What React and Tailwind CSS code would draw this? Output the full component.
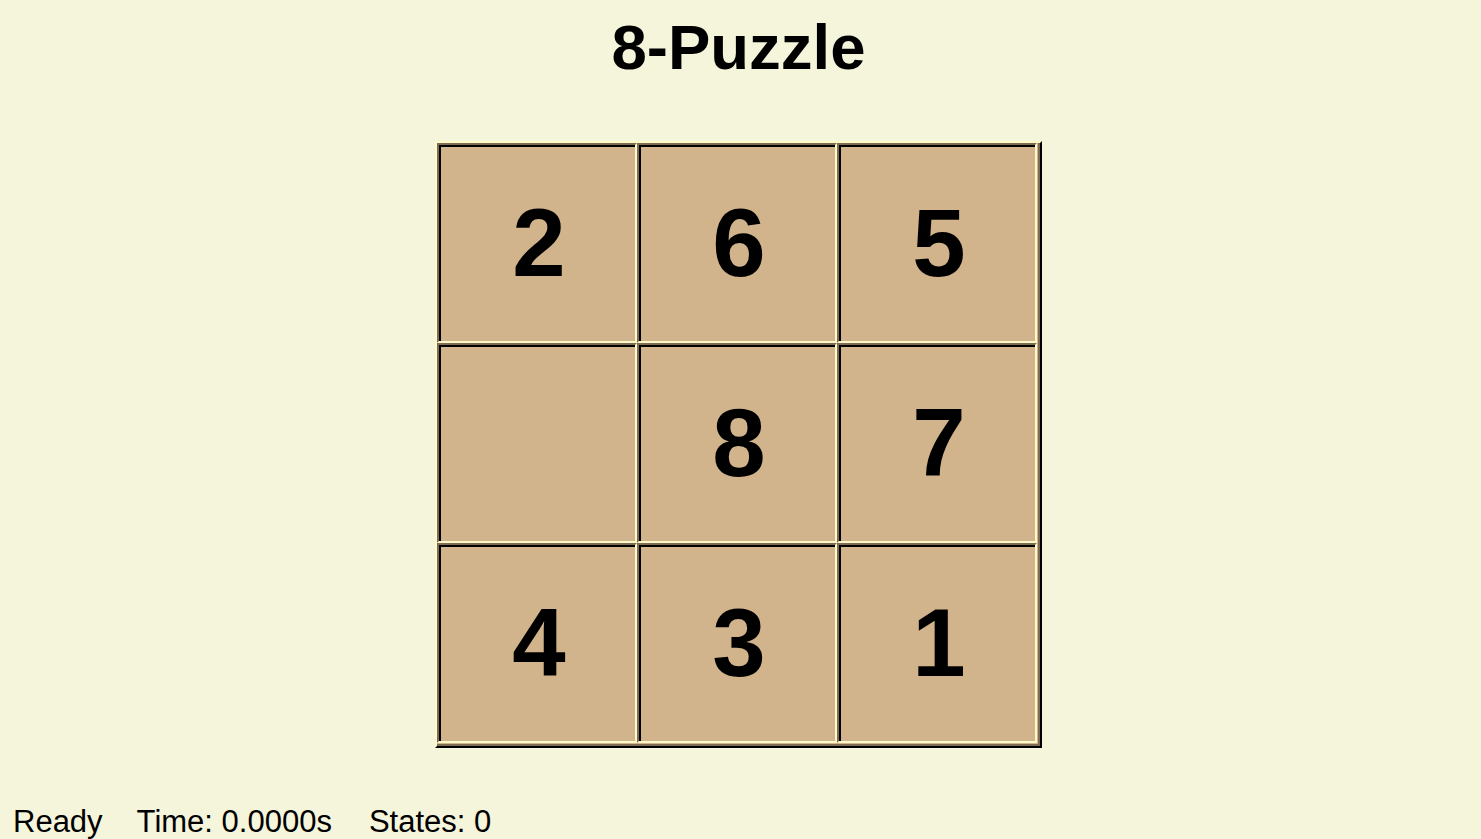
import { useState } from "react";

const START = [2, 6, 5, 0, 8, 7, 4, 3, 1];

function Tile({ value }) {
  return (
    <div className="h-[200px] w-[200px] border-t-[2px] border-l-[2px] border-r-[2px] border-b-[2px] border-t-[#7e6c54] border-l-[#7e6c54] border-r-[#fffac8] border-b-[#fffac8] bg-[#d2b48c]">
      <div className="flex h-full w-full items-center justify-center border-t-[2px] border-l-[2px] border-black pl-[2px] pb-[2px]">
        {value !== 0 ? (
          <span className="text-[96px] font-bold leading-none text-black">
            {value}
          </span>
        ) : null}
      </div>
    </div>
  );
}

export default function App() {
  const [board] = useState(START);

  return (
    <div className="flex h-screen w-full flex-col items-center overflow-hidden bg-[#f5f5dc] pr-[4px] font-['Liberation_Sans',Arial,sans-serif] text-black">
      <h1 className="mt-[16px] text-[63.5px] font-bold leading-none">8-Puzzle</h1>

      <div className="mt-[61px] border-t-[2px] border-l-[2px] border-r-[2px] border-b-[2px] border-t-[#fffac8] border-l-[#fffac8] border-r-black border-b-black">
        <div className="border-r-[2px] border-b-[2px] border-[#7e6c54] bg-[#d2b48c] pr-[1px] pb-[1px]">
          <div className="grid grid-cols-3">
            {board.map((value, i) => (
              <Tile key={i} value={value} />
            ))}
          </div>
        </div>
      </div>

      <div className="mt-[58px] flex w-full pl-[13px] text-[31px] leading-none">
        <span>Ready</span>
        <span className="ml-[34px]">Time: 0.0000s</span>
        <span className="ml-[37px]">States: 0</span>
      </div>
    </div>
  );
}
